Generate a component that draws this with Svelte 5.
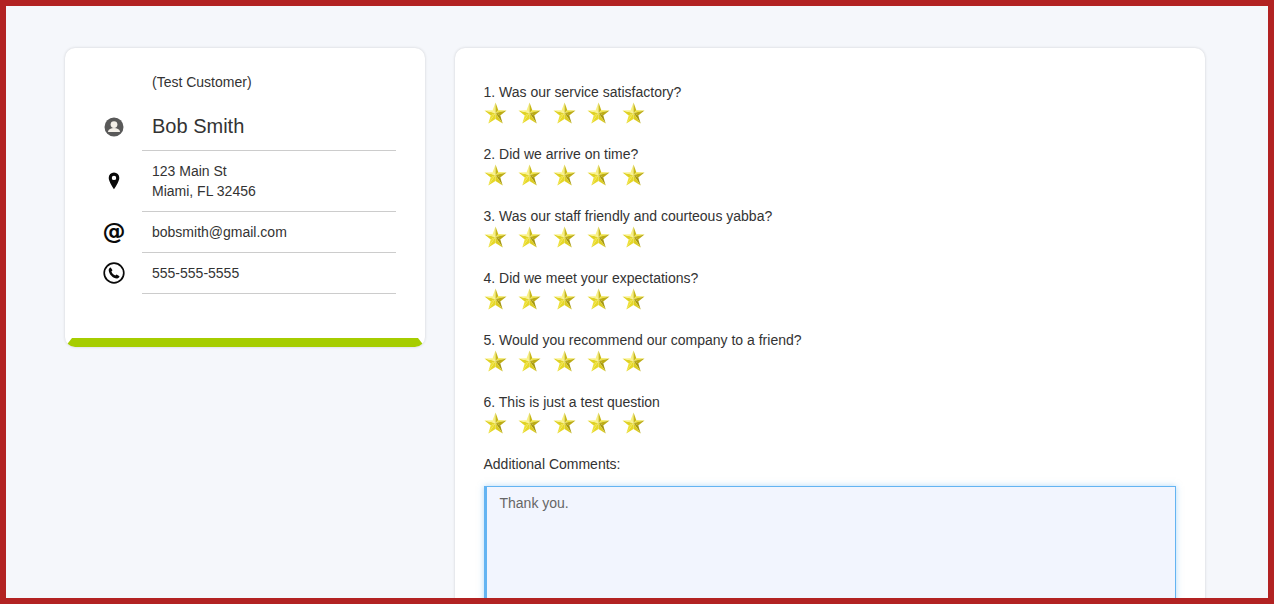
<script>
  const questions = [
    '1. Was our service satisfactory?',
    '2. Did we arrive on time?',
    '3. Was our staff friendly and courteous yabba?',
    '4. Did we meet your expectations?',
    '5. Would you recommend our company to a friend?',
    '6. This is just a test question'
  ];
  const stars = [0, 1, 2, 3, 4];
  const facets = [
    ['M12 11.5L12 0.5L9 8.5Z', '#f8f080'],
    ['M12 11.5L12 0.5L15 8.5Z', '#c8b818'],
    ['M12 11.5L23.5 8.8L15 8.5Z', '#f0e440'],
    ['M12 11.5L23.5 8.8L17 14Z', '#bcac14'],
    ['M12 11.5L19.5 22.5L17 14Z', '#a49610'],
    ['M12 11.5L19.5 22.5L12 17.8Z', '#dccc20'],
    ['M12 11.5L4.5 22.5L12 17.8Z', '#e6d828'],
    ['M12 11.5L4.5 22.5L7 14Z', '#eee034'],
    ['M12 11.5L0.5 8.8L7 14Z', '#e0d224'],
    ['M12 11.5L0.5 8.8L9 8.5Z', '#faf288']
  ];
</script>

<div class="frame">
  <div class="layout">
    <section class="card contact">
      <div class="row tag">
        <div class="icon"></div>
        <div class="value">(Test Customer)</div>
      </div>
      <div class="row name">
        <div class="icon">
          <svg width="20" height="20" viewBox="0 0 20 20">
            <circle cx="10" cy="10" r="9.5" fill="#595959" />
            <circle cx="10" cy="7.6" r="3.4" fill="#f3efe8" />
            <path d="M3.9 15c.5-2.8 3-3.9 6.1-3.9s5.600 1.100 6.100 3.900z" fill="#f3efe8" />
          </svg>
        </div>
        <div class="value lined">Bob Smith</div>
      </div>
      <div class="row address">
        <div class="icon">
          <svg width="12" height="18" viewBox="0 0 12 18">
            <path fill-rule="evenodd" d="M6 .5a5.300 5.300 0 0 0-5.300 5.400C.7 9.500 6 17.300 6 17.300s5.300-7.800 5.300-11.400A5.300 5.300 0 0 0 6 .5zm0 3.200a2.200 2.200 0 1 1 0 4.400 2.200 2.200 0 0 1 0-4.400z" fill="#0a0a0a" />
          </svg>
        </div>
        <div class="value lined">123 Main St<br />Miami, FL 32456</div>
      </div>
      <div class="row email">
        <div class="icon at">@</div>
        <div class="value lined">bobsmith@gmail.com</div>
      </div>
      <div class="row phone">
        <div class="icon">
          <svg width="22" height="22" viewBox="0 0 22 22">
            <circle cx="11" cy="11" r="9.800" fill="none" stroke="#0a0a0a" stroke-width="1.700" />
            <path d="M7.700 5.400l1.800 2.900-1.100 1.300c.6 1.700 2.100 3.300 3.900 4l1.300-1.100 2.900 1.800c-.3 1.300-1.200 2.200-2.500 2.200-4.200-.4-7.900-4-8.300-8.300 0-1.400.8-2.500 2-2.800z" fill="#0a0a0a" />
          </svg>
        </div>
        <div class="value lined">555-555-5555</div>
      </div>
      <div class="accent"></div>
    </section>

    <section class="card survey">
      {#each questions as q}
        <div class="question">
          <div class="label">{q}</div>
          <div class="stars">
            {#each stars as s}
              <svg class="star" width="23" height="22" viewBox="0 0 24 23">
                {#each facets as [d, fill]}
                  <path {d} {fill} />
                {/each}
              </svg>
            {/each}
          </div>
        </div>
      {/each}
      <label class="comments-label" for="comments">Additional Comments:</label>
      <textarea id="comments" class="comments">Thank you.</textarea>
    </section>
  </div>
</div>

<style>
  :global(body) {
    margin: 0;
    font-family: "Liberation Sans", Arial, sans-serif;
    color: #333;
  }
  .frame {
    box-sizing: border-box;
    height: 604px;
    border: 6px solid #b22222;
    background: #f5f7fb;
    overflow: hidden;
  }
  .layout {
    display: flex;
    align-items: flex-start;
    gap: 30px;
    padding: 42px 0 0 59px;
  }
  .card {
    background: #fff;
    border-radius: 10px;
    box-shadow: 0 0 3px rgba(0, 0, 0, 0.16);
    box-sizing: border-box;
  }
  .contact {
    width: 360px;
    height: 299px;
    padding-top: 24px;
    padding-right: 29px;
    position: relative;
    overflow: hidden;
    font-size: 14px;
  }
  .row {
    display: flex;
    align-items: stretch;
  }
  .icon {
    width: 77px;
    flex: none;
    padding-left: 21px;
    box-sizing: border-box;
    display: flex;
    align-items: center;
    justify-content: center;
  }
  .value {
    flex: 1;
    padding-left: 10px;
    line-height: 20px;
  }
  .lined {
    border-bottom: 1px solid #ccc;
  }
  .tag .value {
    height: 20px;
  }
  .name {
    margin-top: 14px;
  }
  .name .value {
    font-size: 20px;
    line-height: 28px;
    box-sizing: border-box;
    height: 45px;
    padding-top: 6px;
  }
  .name .icon {
    padding-bottom: 4px;
  }
  .address .value,
  .email .value,
  .phone .value {
    padding-top: 10px;
    padding-bottom: 10px;
  }
  .address .icon {
    padding-bottom: 2px;
  }
  .at {
    font-family: "DejaVu Sans", sans-serif;
    font-size: 23px;
    line-height: 20px;
    font-weight: 700;
    color: #0a0a0a;
    padding-bottom: 3px;
  }
  .phone .icon {
    padding-bottom: 2px;
  }
  .accent {
    position: absolute;
    left: 0;
    right: 0;
    bottom: 0;
    height: 9px;
    background: #a6cd00;
    clip-path: polygon(7px 0, calc(100% - 7px) 0, 100% 100%, 0 100%);
  }
  .survey {
    width: 750px;
    padding: 35px 29px 40px 28.500px;
    min-height: 600px;
    font-size: 14px;
  }
  .question {
    height: 62px;
  }
  .label {
    line-height: 18px;
  }
  .stars {
    display: flex;
    gap: 11.600px;
    height: 24px;
    padding-top: 1px;
  }
  .star {
    display: block;
    flex: none;
  }
  .comments-label {
    display: block;
    line-height: 18px;
  }
  .comments {
    display: block;
    box-sizing: border-box;
    width: 692.500px;
    height: 200px;
    margin-top: 13px;
    padding: 7px 13px;
    border: 1px solid #64b4f2;
    border-left-width: 3px;
    border-radius: 0;
    background: #f2f5fe;
    box-shadow: 0 0 6px rgba(100, 180, 242, 0.5);
    color: #666;
    font: 14px/18px "Liberation Sans", Arial, sans-serif;
    outline: none;
    resize: none;
  }
</style>
